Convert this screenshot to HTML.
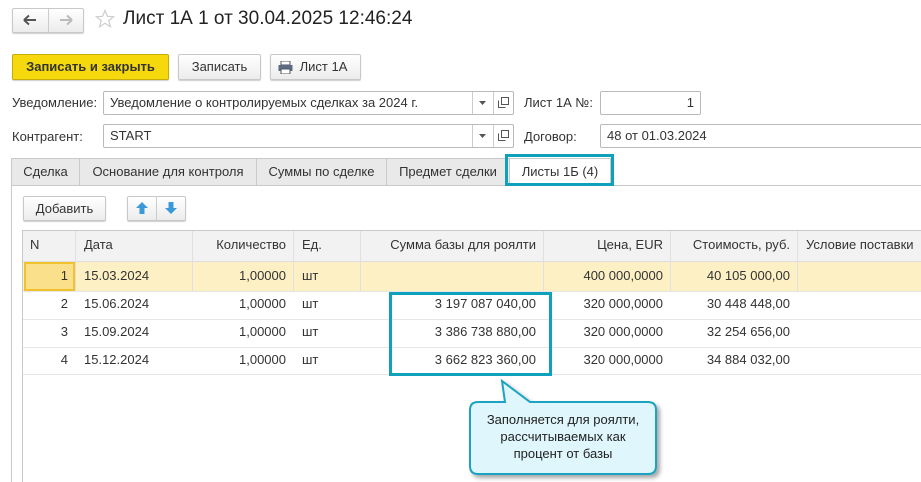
<!DOCTYPE html>
<html style="width:921px;height:482px;overflow:hidden"><head><meta charset="utf-8"><style>
*{box-sizing:border-box;margin:0;padding:0}
body{width:921px;height:482px;overflow:hidden;background:#fff;font-family:"Liberation Sans",Arial,sans-serif;font-size:13px;color:#333;position:relative}
.a{position:absolute}
.btn{position:absolute;border:1px solid #c8c8c8;border-radius:2px;background:linear-gradient(#fff,#ececec);box-shadow:0 1px 1px rgba(0,0,0,.2);text-align:center;line-height:23px;color:#333}
.inp{position:absolute;border:1px solid #b9b9b9;border-radius:2px;background:#fff;height:24px;line-height:22px;padding:0 6px}
.tab{position:absolute;top:158px;height:27px;border:1px solid #c9c9c9;border-bottom:none;background:#e9e9e9;line-height:26px;text-align:center}
.th,.td{position:absolute;line-height:28px;padding:0 7px;white-space:nowrap}
.r{text-align:right}
</style></head><body>
<div class="btn" style="left:12px;top:8px;width:72px;height:25px"></div>
<div class="a" style="left:48px;top:9px;width:1px;height:23px;background:#ccc"></div>
<svg class="a" style="left:23px;top:14px" width="14" height="12"><path d="M1 6H13M1 6L6 1.5M1 6L6 10.5" stroke="#555" stroke-width="2" fill="none"/></svg>
<svg class="a" style="left:59px;top:14px" width="14" height="12"><path d="M1 6H13M13 6L8 1.5M13 6L8 10.5" stroke="#bbb" stroke-width="2" fill="none"/></svg>
<svg class="a" style="left:95px;top:9px" width="20" height="20"><path d="M10 1.5L12.4 7.3L18.6 7.7L13.8 11.6L15.4 17.7L10 14.3L4.6 17.7L6.2 11.6L1.4 7.7L7.6 7.3Z" fill="none" stroke="#ccc" stroke-width="1.2"/></svg>
<div class="a" style="left:123px;top:8px;font-size:19px;color:#222">Лист 1А 1 от 30.04.2025 12:46:24</div>

<div class="btn" style="left:12px;top:54px;width:157px;height:26px;background:#f5d90c;border-color:#c9ad00;font-weight:bold;color:#333">Записать и закрыть</div>
<div class="btn" style="left:178px;top:54px;width:83px;height:26px">Записать</div>
<div class="btn" style="left:270px;top:54px;width:91px;height:26px;padding-left:16px">Лист 1А</div>
<svg class="a" style="left:278px;top:61px" width="15" height="13"><rect x="3" y="0" width="9" height="4" fill="#fff" stroke="#556"/><rect x="0.5" y="4" width="14" height="6" fill="#5a6a80"/><rect x="3" y="8" width="9" height="5" fill="#fff" stroke="#556"/></svg>

<div class="a" style="left:12px;top:95px">Уведомление:</div>
<div class="inp" style="left:103px;top:91px;width:411px">Уведомление о контролируемых сделках за 2024 г.</div>
<div class="a" style="left:472px;top:92px;width:1px;height:22px;background:#ccc"></div>
<div class="a" style="left:493px;top:92px;width:1px;height:22px;background:#ccc"></div>
<svg class="a" style="left:479px;top:101px" width="7" height="4"><path d="M0 0H7L3.5 4Z" fill="#555"/></svg>
<svg class="a" style="left:498px;top:97px" width="11" height="11"><rect x="3.5" y="0.5" width="7" height="7" fill="none" stroke="#555"/><path d="M0.5 3.5V10.5H7.5" fill="none" stroke="#555"/></svg>
<div class="a" style="left:524px;top:95px">Лист 1А №:</div>
<div class="inp r" style="left:600px;top:91px;width:101px">1</div>

<div class="a" style="left:12px;top:129px">Контрагент:</div>
<div class="inp" style="left:103px;top:124px;width:411px">START</div>
<div class="a" style="left:472px;top:125px;width:1px;height:22px;background:#ccc"></div>
<div class="a" style="left:493px;top:125px;width:1px;height:22px;background:#ccc"></div>
<svg class="a" style="left:479px;top:134px" width="7" height="4"><path d="M0 0H7L3.5 4Z" fill="#555"/></svg>
<svg class="a" style="left:498px;top:130px" width="11" height="11"><rect x="3.5" y="0.5" width="7" height="7" fill="none" stroke="#555"/><path d="M0.5 3.5V10.5H7.5" fill="none" stroke="#555"/></svg>
<div class="a" style="left:524px;top:129px">Договор:</div>
<div class="inp" style="left:600px;top:124px;width:330px">48 от 01.03.2024</div>

<div class="a" style="left:11px;top:185px;width:910px;height:1px;background:#c9c9c9"></div>
<div class="a" style="left:11px;top:185px;width:1px;height:297px;background:#c9c9c9"></div>
<div class="tab" style="left:11px;width:69px">Сделка</div>
<div class="tab" style="left:79px;width:178px">Основание для контроля</div>
<div class="tab" style="left:256px;width:131px">Суммы по сделке</div>
<div class="tab" style="left:386px;width:124px">Предмет сделки</div>
<div class="tab" style="left:509px;width:102px;background:#fff;height:28px">Листы 1Б (4)</div>
<div class="a" style="left:505px;top:154px;width:109px;height:32px;border:3px solid #0fa0bc"></div>

<div class="btn" style="left:23px;top:196px;width:83px;height:25px">Добавить</div>
<div class="btn" style="left:127px;top:196px;width:59px;height:25px"></div>
<div class="a" style="left:156px;top:197px;width:1px;height:23px;background:#ccc"></div>
<svg class="a" style="left:135px;top:201px" width="14" height="14"><path d="M7 1L13 7H9.5V13H4.5V7H1Z" fill="#3a9ad9"/></svg>
<svg class="a" style="left:164px;top:201px" width="14" height="14"><path d="M7 13L13 7H9.5V1H4.5V7H1Z" fill="#3a9ad9"/></svg>

<div class="a" style="left:22px;top:230px;width:899px;height:252px;border:1px solid #c9c9c9;border-right:none;border-bottom:none"></div>
<div class="a" style="left:23px;top:231px;width:898px;height:31px;background:#f2f2f2;border-bottom:1px solid #ddd"></div>
<div class="a" style="left:23px;top:262px;width:898px;height:29px;background:#fdf0c4"></div>
<div class="a" style="left:24px;top:262px;width:51px;height:29px;background:#fbe08c;border:2px solid #f0c22c"></div>
<div class="a" style="left:23px;top:291px;width:898px;height:1px;background:#e6e6e6"></div>
<div class="a" style="left:23px;top:319px;width:898px;height:1px;background:#e6e6e6"></div>
<div class="a" style="left:23px;top:347px;width:898px;height:1px;background:#e6e6e6"></div>
<div class="a" style="left:23px;top:374px;width:898px;height:1px;background:#e6e6e6"></div>
<div class="a" style="left:75px;top:231px;width:1px;height:60px;background:#e0e0e0"></div>
<div class="a" style="left:192px;top:231px;width:1px;height:60px;background:#e0e0e0"></div>
<div class="a" style="left:293px;top:231px;width:1px;height:60px;background:#e0e0e0"></div>
<div class="a" style="left:360px;top:231px;width:1px;height:60px;background:#e0e0e0"></div>
<div class="a" style="left:543px;top:231px;width:1px;height:60px;background:#e0e0e0"></div>
<div class="a" style="left:670px;top:231px;width:1px;height:60px;background:#e0e0e0"></div>
<div class="a" style="left:797px;top:231px;width:1px;height:60px;background:#e0e0e0"></div>

<div class="th" style="left:23px;top:231px">N</div>
<div class="th" style="left:77px;top:231px">Дата</div>
<div class="th r" style="left:192px;top:231px;width:101px">Количество</div>
<div class="th" style="left:295px;top:231px">Ед.</div>
<div class="th r" style="left:360px;top:231px;width:183px">Сумма базы для роялти</div>
<div class="th r" style="left:543px;top:231px;width:127px">Цена, EUR</div>
<div class="th r" style="left:670px;top:231px;width:127px">Стоимость, руб.</div>
<div class="th" style="left:799px;top:231px">Условие поставки</div>

<div class="td r" style="left:23px;top:262px;width:52px">1</div><div class="td" style="left:77px;top:262px">15.03.2024</div><div class="td r" style="left:192px;top:262px;width:101px">1,00000</div><div class="td" style="left:295px;top:262px">шт</div><div class="td r" style="left:543px;top:262px;width:127px">400 000,0000</div><div class="td r" style="left:670px;top:262px;width:127px">40 105 000,00</div>
<div class="td r" style="left:23px;top:290px;width:52px">2</div><div class="td" style="left:77px;top:290px">15.06.2024</div><div class="td r" style="left:192px;top:290px;width:101px">1,00000</div><div class="td" style="left:295px;top:290px">шт</div><div class="td r" style="left:360px;top:290px;width:183px">3 197 087 040,00</div><div class="td r" style="left:543px;top:290px;width:127px">320 000,0000</div><div class="td r" style="left:670px;top:290px;width:127px">30 448 448,00</div>
<div class="td r" style="left:23px;top:318px;width:52px">3</div><div class="td" style="left:77px;top:318px">15.09.2024</div><div class="td r" style="left:192px;top:318px;width:101px">1,00000</div><div class="td" style="left:295px;top:318px">шт</div><div class="td r" style="left:360px;top:318px;width:183px">3 386 738 880,00</div><div class="td r" style="left:543px;top:318px;width:127px">320 000,0000</div><div class="td r" style="left:670px;top:318px;width:127px">32 254 656,00</div>
<div class="td r" style="left:23px;top:346px;width:52px">4</div><div class="td" style="left:77px;top:346px">15.12.2024</div><div class="td r" style="left:192px;top:346px;width:101px">1,00000</div><div class="td" style="left:295px;top:346px">шт</div><div class="td r" style="left:360px;top:346px;width:183px">3 662 823 360,00</div><div class="td r" style="left:543px;top:346px;width:127px">320 000,0000</div><div class="td r" style="left:670px;top:346px;width:127px">34 884 032,00</div>

<div class="a" style="left:389px;top:292px;width:163px;height:84px;border:3px solid #0fa0bc"></div>

<svg class="a" style="left:460px;top:376px" width="210" height="106">
<defs><filter id="s"><feDropShadow dx="3" dy="3" stdDeviation="2" flood-opacity=".35"/></filter></defs>
<path d="M18 26 H45 L42 5 L70 26 H188 Q196 26 196 34 V90 Q196 98 188 98 H18 Q10 98 10 90 V34 Q10 26 18 26Z" fill="#dff6fc" stroke="#1aa3c2" stroke-width="2" filter="url(#s)"/>
<text x="103" y="48" text-anchor="middle" font-family="Liberation Sans,sans-serif" font-size="13" fill="#222">Заполняется для роялти,</text>
<text x="103" y="65" text-anchor="middle" font-family="Liberation Sans,sans-serif" font-size="13" fill="#222">рассчитываемых как</text>
<text x="103" y="82" text-anchor="middle" font-family="Liberation Sans,sans-serif" font-size="13" fill="#222">процент от базы</text>
</svg>
</body></html>
